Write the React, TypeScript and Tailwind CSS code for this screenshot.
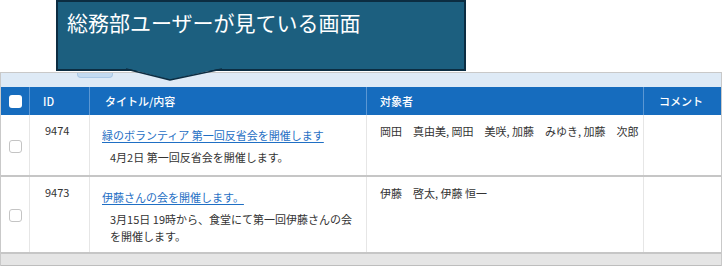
import React from 'react';

const font = { fontFamily: '"Noto Sans CJK JP", "Noto Sans", sans-serif' };

type Row = {
  id: string;
  title: string;
  body: string;
  targets: string;
  height: string;
};

const rows: Row[] = [
  {
    id: '9474',
    title: '緑のボランティア 第一回反省会を開催します',
    body: '4月2日 第一回反省会を開催します。',
    targets: '岡田　真由美, 岡田　美咲, 加藤　みゆき, 加藤　次郎',
    height: 'h-[62px]',
  },
  {
    id: '9473',
    title: '伊藤さんの会を開催します。',
    body: '3月15日 19時から、食堂にて第一回伊藤さんの会を開催します。',
    targets: '伊藤　啓太, 伊藤 恒一',
    height: 'h-[77px]',
  },
];

function Checkbox({ header }: { header?: boolean }) {
  return header ? (
    <div className="w-[13px] h-[13px] rounded-[3px] bg-white" />
  ) : (
    <div className="w-[13px] h-[13px] rounded-[3px] bg-white border border-[#c4c4c4]" />
  );
}

export default function App() {
  return (
    <div className="relative w-[726px] h-[268px] bg-white overflow-hidden" style={font}>
      <div className="pt-[72px] pr-[4px]">
        <div className="border-l border-t border-r border-[#c9c9c9]">
          {/* toolbar strip */}
          <div className="h-[14px] bg-[#deeaf6] pl-[76px]">
            <div className="w-[36px] h-[5px] rounded-b-[4px] bg-[#c3daf0] border-x border-b border-[#a9c8e6]" />
          </div>

          {/* header */}
          <div className="grid grid-cols-[29px_60px_277px_277px_1fr] h-[28px] bg-[#166cbe] text-white text-[11px] font-medium">
            <div className="flex items-center pl-[8px] border-r border-[#5b97d3]">
              <Checkbox header />
            </div>
            <div className="flex items-center pl-[13px] border-r border-[#5b97d3]">ID</div>
            <div className="flex items-center pl-[15px] border-r border-[#5b97d3]">タイトル/内容</div>
            <div className="flex items-center pl-[13px] border-r border-[#5b97d3]">対象者</div>
            <div className="flex items-center pl-[15px]">コメント</div>
          </div>

          {/* rows */}
          {rows.map((r) => (
            <div
              key={r.id}
              className={`grid grid-cols-[29px_60px_277px_277px_1fr] ${r.height} border-b-2 border-[#c6c6c6] text-[11px] text-[#333333]`}
            >
              <div className="flex items-center pl-[8px] pt-[2px] border-r border-[#e6e6e6]">
                <Checkbox />
              </div>
              <div className="pl-[15px] pt-[7px] leading-[16px] border-r border-[#e6e6e6]">{r.id}</div>
              <div className="pt-[12px] border-r border-[#e6e6e6]">
                <div className="pl-[12px] leading-[16px] text-[#1f6fc4] underline underline-offset-2">{r.title}</div>
                <div className="pl-[20px] mt-[6px] w-[270px] leading-[17px]">{r.body}</div>
              </div>
              <div className="pl-[13px] pt-[8px] leading-[16px] border-r border-[#e6e6e6]">{r.targets}</div>
              <div />
            </div>
          ))}

          {/* bottom bar */}
          <div className="h-[12px] bg-[#e5e5e5] border-b border-[#bdbdbd]" />
        </div>
      </div>

      {/* annotation callout */}
      <div className="absolute left-[56px] top-0 w-[410px] h-[71px] bg-[#1c5f7f] border-2 border-[#0c2d42] pl-[9px] pt-[5px]">
        <span className="text-white text-[21px] leading-[30px]">総務部ユーザーが見ている画面</span>
      </div>
      <svg className="absolute left-0 top-0" width="726" height="90" viewBox="0 0 726 90">
        <polygon points="126,68 170,80 222,68" fill="#1c5f7f" />
        <polyline points="126,69 170,80 222,69" fill="none" stroke="#0c2d42" strokeWidth="1.5" />
      </svg>
    </div>
  );
}
